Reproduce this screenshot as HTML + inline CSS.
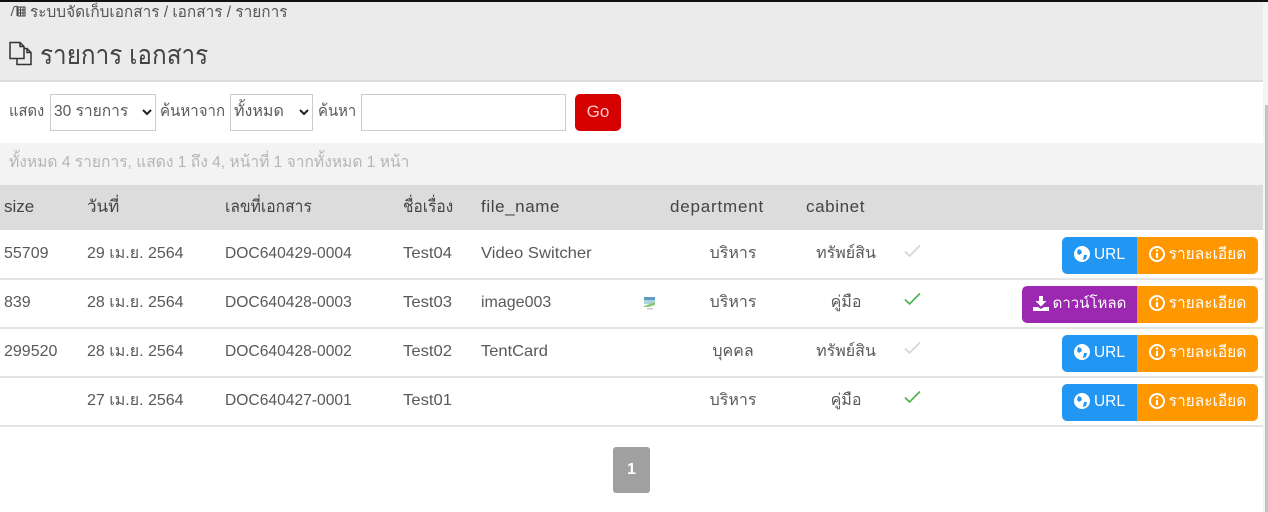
<!DOCTYPE html>
<html><head><meta charset="utf-8">
<style>
html,body{margin:0;padding:0;width:1268px;height:512px;overflow:hidden;background:#fff;}
body{position:relative;font-family:"Liberation Sans","DejaVu Sans","Noto Sans CJK JP",sans-serif;color:#555;font-size:16px;}
.a{position:absolute;white-space:nowrap;transform-origin:0 0;}
.c{transform:translateX(-50%);}
.h{font-size:17px;color:#444;top:197px;line-height:20px;}
.hl{letter-spacing:.6px;}
.t{font-size:16px;color:#595959;line-height:20px;}
.line{position:absolute;left:0;width:1263px;height:2px;background:#e4e4e4;}
.btn{position:absolute;height:37px;line-height:36px;color:#fff;font-size:15.5px;text-align:center;box-sizing:border-box;white-space:nowrap;}
.bl{background:#2196f3;left:1062px;width:75px;border-radius:5px 0 0 5px;}
.pu{background:#9c27b0;left:1022px;width:115px;border-radius:5px 0 0 5px;}
.or{background:#ff9800;left:1137px;width:121px;border-radius:0 5px 5px 0;}
.btn svg{vertical-align:-3px;margin-right:4px;}
.sel{position:absolute;top:94px;height:37px;box-sizing:border-box;border:1px solid #ccc;background:#fff;}
</style></head><body>
<div class="a" style="left:0;top:0;width:1268px;height:2px;background:#111"></div>
<div class="a" style="left:0;top:2px;width:1263px;height:78px;background:#ebebeb"></div>
<div class="a" style="left:0;top:80px;width:1263px;height:2px;background:#dcdcdc"></div>
<div class="a" style="left:1263px;top:2px;width:5px;height:510px;background:#f5f5f5"></div>
<div class="a" style="left:1265px;top:105px;width:3px;height:407px;background:#c2c2c2"></div>

<svg class="a" style="left:10px;top:5px" width="16" height="13" viewBox="0 0 16 13"><path d="M1 11l3-9M3.500 2L7 1M7 1v10" fill="none" stroke="#555" stroke-width="1.100"/><path d="M8 2h7v9H8zM8 5h7M8 8h7M10.500 2v9M13 2v9" fill="none" stroke="#444" stroke-width="1"/></svg>
<div class="a" style="left:30px;top:3px;font-size:15.4px;line-height:20px;color:#555">ระบบจัดเก็บเอกสาร / เอกสาร / รายการ</div>

<svg class="a" style="left:9px;top:41px" width="26" height="26" viewBox="0 0 26 26"><path d="M1 1.500h10l4 4v12H1zM11 1.500v4h4M15 7.500h3l4 4v12H8v-6M18 7.500v4h4" fill="none" stroke="#333" stroke-width="1.500"/></svg>
<div class="a" style="left:40px;top:39px;font-size:27px;line-height:32px;color:#444;transform:scaleX(.9)">รายการ เอกสาร</div>

<div class="a t" style="left:9px;top:102px;transform:scaleX(.92)">แสดง</div>
<div class="sel" style="left:50px;width:106px"></div>
<div class="a t" style="left:54px;top:102px;transform:scaleX(.97)">30 รายการ</div>
<svg class="a" style="left:142px;top:109px" width="10" height="7" viewBox="0 0 10 7"><path d="M1 1l4 4 4-4" fill="none" stroke="#222" stroke-width="2"/></svg>
<div class="a t" style="left:160px;top:102px;transform:scaleX(.94)">ค้นหาจาก</div>
<div class="sel" style="left:230px;width:83px"></div>
<div class="a t" style="left:234px;top:102px">ทั้งหมด</div>
<svg class="a" style="left:299px;top:109px" width="10" height="7" viewBox="0 0 10 7"><path d="M1 1l4 4 4-4" fill="none" stroke="#222" stroke-width="2"/></svg>
<div class="a t" style="left:318px;top:102px;transform:scaleX(.93)">ค้นหา</div>
<div class="sel" style="left:361px;width:205px"></div>
<div class="a" style="left:575px;top:94px;width:46px;height:37px;background:#d50000;border-radius:5px;color:#ffc9c9;text-align:center;line-height:36px;font-size:17px">Go</div>

<div class="a" style="left:0;top:143px;width:1263px;height:42px;background:#f3f3f3"></div>
<div class="a" style="left:9px;top:153px;font-size:16px;line-height:20px;color:#b5b5b5;transform:scaleX(.973)">ทั้งหมด 4 รายการ, แสดง 1 ถึง 4, หน้าที่ 1 จากทั้งหมด 1 หน้า</div>

<div class="a" style="left:0;top:185px;width:1263px;height:45px;background:#dcdcdc"></div>
<div class="a h" style="left:4px">size</div>
<div class="a h" style="left:87px">วันที่</div>
<div class="a h" style="left:225px;transform:scaleX(.92)">เลขที่เอกสาร</div>
<div class="a h" style="left:403px;transform:scaleX(.91)">ชื่อเรื่อง</div>
<div class="a h hl" style="left:481px">file_name</div>
<div class="a h hl" style="left:670px;letter-spacing:.8px">department</div>
<div class="a h hl" style="left:806px">cabinet</div>

<div class="line" style="top:278px"></div>
<div class="line" style="top:327px"></div>
<div class="line" style="top:376px"></div>
<div class="line" style="top:425px"></div>

<!-- row 1 -->
<div class="a t" style="left:4px;top:244px">55709</div>
<div class="a t" style="left:87px;top:244px">29 เม.ย. 2564</div>
<div class="a t" style="left:225px;top:244px;transform:scaleX(.976)">DOC640429-0004</div>
<div class="a t" style="left:403px;top:244px;transform:scaleX(1.04)">Test04</div>
<div class="a t" style="left:481px;top:244px;transform:scaleX(1.04)">Video Switcher</div>
<div class="a t c" style="left:733px;top:244px">บริหาร</div>
<div class="a t c" style="left:846px;top:244px">ทรัพย์สิน</div>
<svg class="a" style="left:904px;top:244px" width="17" height="14" viewBox="0 0 17 14"><path d="M1 7.500l4.500 4.500L16 1.500" fill="none" stroke="#d4d4d4" stroke-width="1.600"/></svg>
<div class="btn bl" style="top:237px"><svg width="16" height="16" viewBox="0 0 16 16"><circle cx="8" cy="8" r="8" fill="#fff"/><path d="M4 3l3 1 1 3-3 2-2-2zM10 9l3 0-1 4-3 1z" fill="#2196f3"/></svg>URL</div>
<div class="btn or" style="top:237px"><svg width="16" height="16" viewBox="0 0 16 16"><circle cx="8" cy="8" r="7" fill="none" stroke="#fff" stroke-width="2"/><path d="M8 3.500v2M8 7v5" stroke="#fff" stroke-width="2.200"/></svg>รายละเอียด</div>

<!-- row 2 -->
<div class="a t" style="left:4px;top:293px">839</div>
<div class="a t" style="left:87px;top:293px">28 เม.ย. 2564</div>
<div class="a t" style="left:225px;top:293px;transform:scaleX(.976)">DOC640428-0003</div>
<div class="a t" style="left:403px;top:293px;transform:scaleX(1.04)">Test03</div>
<div class="a t" style="left:481px;top:293px">image003</div>
<svg class="a" style="left:643px;top:296px" width="13" height="15" viewBox="0 0 13 15"><rect x="1" y="1" width="11" height="3" fill="#5d9cc0"/><rect x="1" y="4" width="11" height="4" fill="#a8d4e0"/><path d="M1 10l11-4v3l-6 2H1z" fill="#8cc878"/><rect x="4" y="12" width="6" height="1.500" fill="#ccc"/></svg>
<div class="a t c" style="left:733px;top:293px">บริหาร</div>
<div class="a t c" style="left:846px;top:293px">คู่มือ</div>
<svg class="a" style="left:904px;top:292px" width="17" height="14" viewBox="0 0 17 14"><path d="M1 7.500l4.500 4.500L16 1.500" fill="none" stroke="#4caf50" stroke-width="1.600"/></svg>
<div class="btn pu" style="top:286px"><svg width="16" height="15" viewBox="0 0 16 15"><path d="M6 0h4v5h3.500L8 10.500 2.500 5H6zM0 11h5l3 2 3-2h5v4H0z" fill="#fff"/></svg><span style="font-size:15px">ดาวน์โหลด</span></div>
<div class="btn or" style="top:286px"><svg width="16" height="16" viewBox="0 0 16 16"><circle cx="8" cy="8" r="7" fill="none" stroke="#fff" stroke-width="2"/><path d="M8 3.500v2M8 7v5" stroke="#fff" stroke-width="2.200"/></svg>รายละเอียด</div>

<!-- row 3 -->
<div class="a t" style="left:4px;top:342px">299520</div>
<div class="a t" style="left:87px;top:342px">28 เม.ย. 2564</div>
<div class="a t" style="left:225px;top:342px;transform:scaleX(.976)">DOC640428-0002</div>
<div class="a t" style="left:403px;top:342px;transform:scaleX(1.04)">Test02</div>
<div class="a t" style="left:481px;top:342px;transform:scaleX(1.03)">TentCard</div>
<div class="a t c" style="left:733px;top:342px">บุคคล</div>
<div class="a t c" style="left:846px;top:342px">ทรัพย์สิน</div>
<svg class="a" style="left:904px;top:341px" width="17" height="14" viewBox="0 0 17 14"><path d="M1 7.500l4.500 4.500L16 1.500" fill="none" stroke="#d4d4d4" stroke-width="1.600"/></svg>
<div class="btn bl" style="top:335px"><svg width="16" height="16" viewBox="0 0 16 16"><circle cx="8" cy="8" r="8" fill="#fff"/><path d="M4 3l3 1 1 3-3 2-2-2zM10 9l3 0-1 4-3 1z" fill="#2196f3"/></svg>URL</div>
<div class="btn or" style="top:335px"><svg width="16" height="16" viewBox="0 0 16 16"><circle cx="8" cy="8" r="7" fill="none" stroke="#fff" stroke-width="2"/><path d="M8 3.500v2M8 7v5" stroke="#fff" stroke-width="2.200"/></svg>รายละเอียด</div>

<!-- row 4 -->
<div class="a t" style="left:87px;top:391px">27 เม.ย. 2564</div>
<div class="a t" style="left:225px;top:391px;transform:scaleX(.976)">DOC640427-0001</div>
<div class="a t" style="left:403px;top:391px;transform:scaleX(1.04)">Test01</div>
<div class="a t c" style="left:733px;top:391px">บริหาร</div>
<div class="a t c" style="left:846px;top:391px">คู่มือ</div>
<svg class="a" style="left:904px;top:390px" width="17" height="14" viewBox="0 0 17 14"><path d="M1 7.500l4.500 4.500L16 1.500" fill="none" stroke="#4caf50" stroke-width="1.600"/></svg>
<div class="btn bl" style="top:384px"><svg width="16" height="16" viewBox="0 0 16 16"><circle cx="8" cy="8" r="8" fill="#fff"/><path d="M4 3l3 1 1 3-3 2-2-2zM10 9l3 0-1 4-3 1z" fill="#2196f3"/></svg>URL</div>
<div class="btn or" style="top:384px"><svg width="16" height="16" viewBox="0 0 16 16"><circle cx="8" cy="8" r="7" fill="none" stroke="#fff" stroke-width="2"/><path d="M8 3.500v2M8 7v5" stroke="#fff" stroke-width="2.200"/></svg>รายละเอียด</div>

<div class="a" style="left:613px;top:447px;width:37px;height:46px;background:#a0a0a0;border-radius:3px;color:#fff;font-weight:bold;font-size:16px;line-height:45px;text-align:center">1</div>
</body></html>
